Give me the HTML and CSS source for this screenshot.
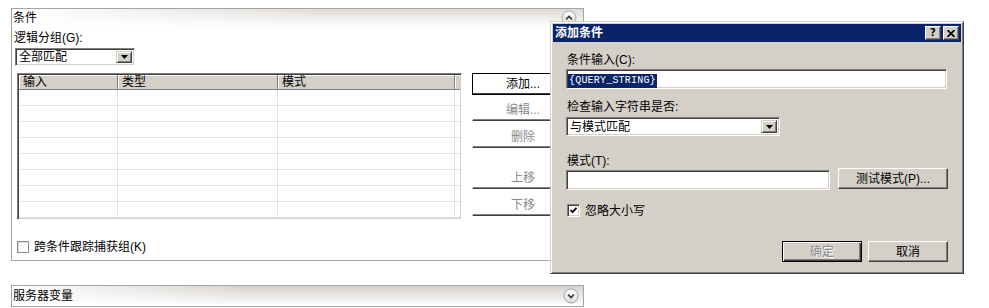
FILE: index.html
```html
<!DOCTYPE html>
<html lang="zh-CN">
<head>
<meta charset="utf-8">
<title>添加条件</title>
<link rel="stylesheet" href="styles.css">
</head>
<body>
<div class="page">
  <section class="panel">
    <div class="panel-head">
      <span class="head-title">条件</span>
      <svg class="chev" width="16" height="16" viewBox="0 0 16 16">
        <defs><linearGradient id="g1" x1="0" y1="0" x2="0" y2="1"><stop offset="0" stop-color="#ffffff"/><stop offset="1" stop-color="#dcdcdc"/></linearGradient></defs>
        <circle cx="8" cy="8" r="7" fill="url(#g1)" stroke="#a4a4a4"/>
        <path d="M5 9.5 L8 6.5 L11 9.5" fill="none" stroke="#333" stroke-width="1.6"/>
      </svg>
    </div>
    <div class="panel-body">
      <div class="lbl">逻辑分组(G):</div>
      <div class="combo combo-panel">
        <span class="combo-text">全部匹配</span>
        <span class="drop"><svg width="7" height="4" viewBox="0 0 7 4"><path d="M0 0h7L3.5 4z" fill="#000"/></svg></span>
      </div>
      <div class="main-row">
        <div class="grid">
          <div class="grid-head">
            <div class="c1">输入</div><div class="c2">类型</div><div class="c3">模式</div><div class="c4"></div>
          </div>
          <div class="grid-row"><div class="c1"></div><div class="c2"></div><div class="c3"></div><div class="c4"></div></div>
          <div class="grid-row"><div class="c1"></div><div class="c2"></div><div class="c3"></div><div class="c4"></div></div>
          <div class="grid-row"><div class="c1"></div><div class="c2"></div><div class="c3"></div><div class="c4"></div></div>
          <div class="grid-row"><div class="c1"></div><div class="c2"></div><div class="c3"></div><div class="c4"></div></div>
          <div class="grid-row"><div class="c1"></div><div class="c2"></div><div class="c3"></div><div class="c4"></div></div>
          <div class="grid-row"><div class="c1"></div><div class="c2"></div><div class="c3"></div><div class="c4"></div></div>
          <div class="grid-row"><div class="c1"></div><div class="c2"></div><div class="c3"></div><div class="c4"></div></div>
          <div class="grid-row"><div class="c1"></div><div class="c2"></div><div class="c3"></div><div class="c4"></div></div>
        </div>
        <div class="btns">
          <div class="btn btn-default">添加...</div>
          <div class="btn disabled b2">编辑...</div>
          <div class="btn disabled b3">删除</div>
          <div class="btn disabled b4">上移</div>
          <div class="btn disabled b5">下移</div>
        </div>
      </div>
      <div class="chk-row panel-chk">
        <span class="chk flat"></span>
        <span>跨条件跟踪捕获组(K)</span>
      </div>
    </div>
  </section>

  <section class="bar">
    <span class="head-title">服务器变量</span>
    <svg class="chev" width="16" height="16" viewBox="0 0 16 16">
      <defs><linearGradient id="g2" x1="0" y1="0" x2="0" y2="1"><stop offset="0" stop-color="#ffffff"/><stop offset="1" stop-color="#dcdcdc"/></linearGradient></defs>
      <circle cx="8" cy="8" r="7" fill="url(#g2)" stroke="#a4a4a4"/>
      <path d="M5 6.5 L8 9.5 L11 6.5" fill="none" stroke="#333" stroke-width="1.6"/>
    </svg>
  </section>

  <div class="dialog">
    <div class="titlebar">
      <span class="title-text">添加条件</span>
      <span class="tbtns">
        <span class="tbtn">?</span>
        <span class="tbtn"><svg width="8" height="7" viewBox="0 0 8 7"><path d="M0.5 0 L7.5 7 M7.5 0 L0.5 7" stroke="#000" stroke-width="1.7"/></svg></span>
      </span>
    </div>
    <div class="dlg-body">
      <div class="dlbl l1">条件输入(C):</div>
      <div class="field f1"><span class="sel">{QUERY_STRING}</span></div>
      <div class="dlbl l2">检查输入字符串是否:</div>
      <div class="combo combo-dlg">
        <span class="combo-text">与模式匹配</span>
        <span class="drop"><svg width="7" height="4" viewBox="0 0 7 4"><path d="M0 0h7L3.5 4z" fill="#000"/></svg></span>
      </div>
      <div class="dlbl l3">模式(T):</div>
      <div class="row3">
        <div class="field f3"></div>
        <div class="dbtn test">测试模式(P)...</div>
      </div>
      <div class="chk-row dlg-chk">
        <span class="chk"><svg width="9" height="9" viewBox="0 0 9 9"><path d="M1.5 4 L3.5 6.2 L7.5 1.8" fill="none" stroke="#000" stroke-width="1.8"/></svg></span>
        <span>忽略大小写</span>
      </div>
      <div class="dlg-btns">
        <div class="dbtn default disabled">确定</div>
        <div class="dbtn">取消</div>
      </div>
    </div>
  </div>
</div>
</body>
</html>
```

FILE: styles.css
```css
* { box-sizing: border-box; }

body {
  margin: 0;
  background: #fff;
  color: #000;
  font-family: "Liberation Sans", "Noto Sans CJK SC", sans-serif;
  font-size: 12px;
  line-height: 14px;
}

.page {
  position: relative;
  width: 989px;
  height: 308px;
  padding: 8px 0 0 11px;
  overflow: hidden;
}

/* ---------- panel ---------- */
.panel {
  width: 573px;
  border: 1px solid #a4a4a4;
}

.panel-head {
  height: 18px;
  display: flex;
  align-items: center;
  justify-content: space-between;
  padding: 0 6px 0 1px;
  background:
    linear-gradient(to right, #ffffff 0%, rgba(255,255,255,0) 55%),
    linear-gradient(to bottom, #dedad6 0%, #ffffff 100%);
}

.head-title { line-height: 14px; }

.chev { display: block; }

.panel-body {
  padding: 0 0 6px 0;
}

.lbl {
  margin: 4px 0 0 2px;
  height: 14px;
}

/* combo boxes */
.combo {
  display: flex;
  align-items: center;
  background: #fff;
  border: 1px solid;
  border-color: #808080 #fff #fff #808080;
  box-shadow: inset 1px 1px #404040, inset -1px -1px #d4d0c8;
  padding: 2px;
}
.combo-text { flex: 1; padding-left: 1px; line-height: 14px; }
.drop {
  width: 16px;
  height: 100%;
  display: flex;
  align-items: center;
  justify-content: center;
  background: #d4d0c8;
  border: 1px solid;
  border-color: #d4d0c8 #404040 #404040 #d4d0c8;
  box-shadow: inset 1px 1px #fff, inset -1px -1px #808080;
}
.combo-panel {
  width: 120px;
  height: 18px;
  margin: 3px 0 0 3px;
}

/* table + buttons */
.main-row {
  display: flex;
  align-items: flex-start;
  margin: 7px 0 0 5px;
}

.grid {
  width: 445px;
  height: 147px;
  background: #fff;
  border: 1px solid;
  border-color: #808080 #fff #fff #808080;
  box-shadow: inset 1px 1px #404040, inset -1px -1px #d4d0c8;
  padding: 1px;
}
.grid-head, .grid-row { display: flex; }
.grid-head { height: 15px; }
.grid-head > div {
  height: 15px;
  background: #d4d0c8;
  border-right: 1px solid #808080;
  border-bottom: 1px solid #808080;
  box-shadow: inset 1px 1px #fff;
  padding-left: 4px;
  line-height: 14px;
}
.grid-row {
  height: 16px;
  border-bottom: 1px solid #e2e2e2;
}
.grid-row > div { border-right: 1px solid #e2e2e2; }
.c1 { width: 99px; }
.c2 { width: 160px; }
.c3 { width: 177px; }
.c4 { flex: 1; border-right: none !important; }

.btns {
  display: flex;
  flex-direction: column;
  margin-left: 10px;
  width: 96px;
}
.btn {
  height: 22px;
  display: flex;
  align-items: center;
  justify-content: center;
  background: #fff;
  border: 1px solid;
  border-color: #fff #404040 #404040 #fff;
  box-shadow: inset -1px -1px #808080;
  padding-left: 6px;
}
.btn-default {
  border-color: #000;
  box-shadow: inset -1px -1px #404040;
}
.disabled { color: #8a8a8a; text-shadow: 1px 1px #fff; }
.b2 { margin-top: 4px; }
.b3 { margin-top: 5px; }
.b4 { margin-top: 19px; }
.b5 { margin-top: 5px; }

/* checkboxes */
.chk-row {
  display: flex;
  align-items: center;
  gap: 5px;
}
.chk {
  width: 13px;
  height: 13px;
  display: flex;
  align-items: center;
  justify-content: center;
  background: #fff;
  border: 1px solid;
  border-color: #808080 #fff #fff #808080;
  box-shadow: inset 1px 1px #404040, inset -1px -1px #d4d0c8;
}
.chk.flat {
  width: 12px;
  height: 12px;
  border: 1px solid #8c8c8c;
  box-shadow: inset 1px 1px #dcdcdc;
}
.panel-chk {
  height: 14px;
  margin: 20px 0 0 5px;
}

/* bottom bar */
.bar {
  width: 573px;
  height: 22px;
  margin-top: 24px;
  border: 1px solid #a4a4a4;
  display: flex;
  align-items: center;
  justify-content: space-between;
  padding: 0 4px 0 1px;
  background:
    linear-gradient(to right, #ffffff 0%, rgba(255,255,255,0) 40%),
    linear-gradient(to bottom, #d6d2cd 0%, #ffffff 100%);
}

/* ---------- dialog ---------- */
.dialog {
  position: absolute;
  left: 550px;
  top: 21px;
  width: 414px;
  height: 253px;
  background: #d4d0c8;
  border: 1px solid;
  border-color: #d4d0c8 #404040 #404040 #d4d0c8;
  box-shadow: inset 1px 1px #fff, inset -1px -1px #808080;
  padding: 2px;
  display: flex;
  flex-direction: column;
}

.titlebar {
  height: 18px;
  background: #0a246a;
  color: #fff;
  display: flex;
  align-items: center;
  justify-content: space-between;
  padding: 0 2px 0 2px;
}
.title-text { font-weight: bold; line-height: 14px; }
.tbtns { display: flex; gap: 2px; }
.tbtn {
  width: 16px;
  height: 14px;
  display: flex;
  align-items: center;
  justify-content: center;
  background: #d4d0c8;
  color: #000;
  font-family: "DejaVu Sans", sans-serif;
  font-weight: bold;
  font-size: 10px;
  line-height: 10px;
  border: 1px solid;
  border-color: #fff #404040 #404040 #fff;
  box-shadow: inset -1px -1px #808080;
}

.dlg-body {
  padding: 0 13px;
  display: flex;
  flex-direction: column;
}
.dlbl { height: 14px; line-height: 14px; padding-left: 1px; }
.l1 { margin-top: 11px; }
.l2 { margin-top: 11px; }
.l3 { margin-top: 18px; }

.field {
  height: 20px;
  background: #fff;
  border: 1px solid;
  border-color: #808080 #fff #fff #808080;
  box-shadow: inset 1px 1px #404040, inset -1px -1px #d4d0c8;
  padding: 2px 0 0 1px;
}
.f1 { width: 381px; margin-top: 2px; }
.sel {
  display: inline-block;
  background: #0a246a;
  color: #fff;
  font-family: "Liberation Mono", monospace;
  font-size: 10px;
  letter-spacing: 0.2px;
  line-height: 14px;
  height: 14px;
  padding: 0 1px;
}

.combo-dlg {
  width: 214px;
  height: 19px;
  margin-top: 3px;
}

.row3 {
  display: flex;
  align-items: flex-start;
  gap: 8px;
}
.f3 { width: 264px; margin-top: 2px; }

.dbtn {
  height: 21px;
  display: flex;
  align-items: center;
  justify-content: center;
  background: #d4d0c8;
  border: 1px solid;
  border-color: #fff #404040 #404040 #fff;
  box-shadow: inset -1px -1px #808080;
}
.test { width: 110px; }
.dbtn.default {
  border-color: #000;
  box-shadow: inset 1px 1px #fff, inset -1px -1px #404040, inset -2px -2px #808080;
}

.dlg-chk {
  height: 15px;
  margin: 13px 0 0 1px;
}

.dlg-btns {
  display: flex;
  justify-content: flex-end;
  gap: 6px;
  margin-top: 23px;
}
.dlg-btns .dbtn { width: 80px; }
```
